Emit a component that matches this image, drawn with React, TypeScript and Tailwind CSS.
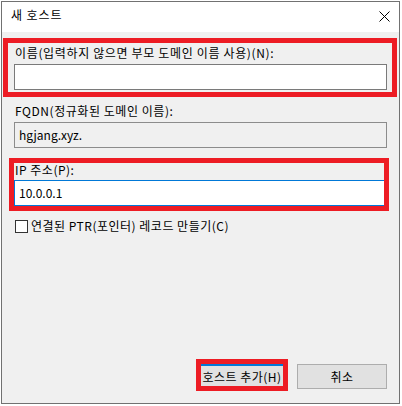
const font = "font-['Noto_Sans_CJK_KR','Noto_Sans',sans-serif]";

function Frame({ className }: { className: string }) {
  return (
    <div
      className={`pointer-events-none absolute border-[5px] border-[#ed1c24] ${className}`}
    />
  );
}

export default function App() {
  return (
    <div className={`relative h-[406px] w-[402px] overflow-hidden bg-white text-[12px] leading-[14px] text-black ${font}`}>
      <div className="ml-px mt-px flex h-[403px] w-[399px] flex-col border border-[#717171] bg-[#f0f0f0]">
        {/* title bar */}
        <div className="flex h-[30px] items-start justify-between bg-white pl-[9px] pr-[9px]">
          <span className="mt-[6px] tracking-[0.9px]">새 호스트</span>
          <svg className="mt-[9px]" width="11" height="11" viewBox="0 0 11 11">
            <path d="M0.5 0.5 L10.5 10.5 M10.5 0.5 L0.5 10.5" stroke="#000" strokeWidth="1" />
          </svg>
        </div>

        <div className="flex flex-1 flex-col px-[12px] pb-[14px]">
          <label className="mt-[14px] pl-px tracking-[0.65px]">이름(입력하지 않으면 부모 도메인 이름 사용)(N):</label>
          <input
            className="mt-[4px] h-[26px] w-full border border-[#7a7a7a] bg-white px-[4px] outline-none"
            defaultValue=""
          />

          <label className="mt-[14px] pl-px tracking-[0.55px]">FQDN(정규화된 도메인 이름):</label>
          <div className="mt-[4px] flex h-[26px] items-center border border-[#8c8c8c] px-[4px]">
            hgjang.xyz.
          </div>

          <label className="mt-[15px] pl-px tracking-[0.5px]">IP 주소(P):</label>
          <div className="mt-[3px] flex h-[26px] items-center border border-[#0078d7] bg-white px-[4px]">
            10.0.0.1
          </div>

          <div className="mt-[13px] flex items-center gap-[3px] pl-px">
            <span className="h-[13px] w-[13px] border border-[#333333] bg-white" />
            <span className="tracking-[0.5px]">연결된 PTR(포인터) 레코드 만들기(C)</span>
          </div>

          <div className="mt-auto flex justify-end gap-[10px]">
            <button className="flex h-[25px] w-[90px] items-center justify-center border-2 border-[#0078d7] bg-[#e1e1e1] whitespace-nowrap tracking-[0.5px]">
              호스트 추가(H)
            </button>
            <button className="flex h-[25px] w-[90px] items-center justify-center border border-[#adadad] bg-[#e1e1e1] tracking-[0.5px]">
              취소
            </button>
          </div>
        </div>
      </div>

      <Frame className="left-[3px] top-[38px] h-[59px] w-[394px]" />
      <Frame className="left-[9px] top-[158px] h-[53px] w-[380px]" />
      <Frame className="left-[196px] top-[359px] h-[32px] w-[92px]" />
    </div>
  );
}
